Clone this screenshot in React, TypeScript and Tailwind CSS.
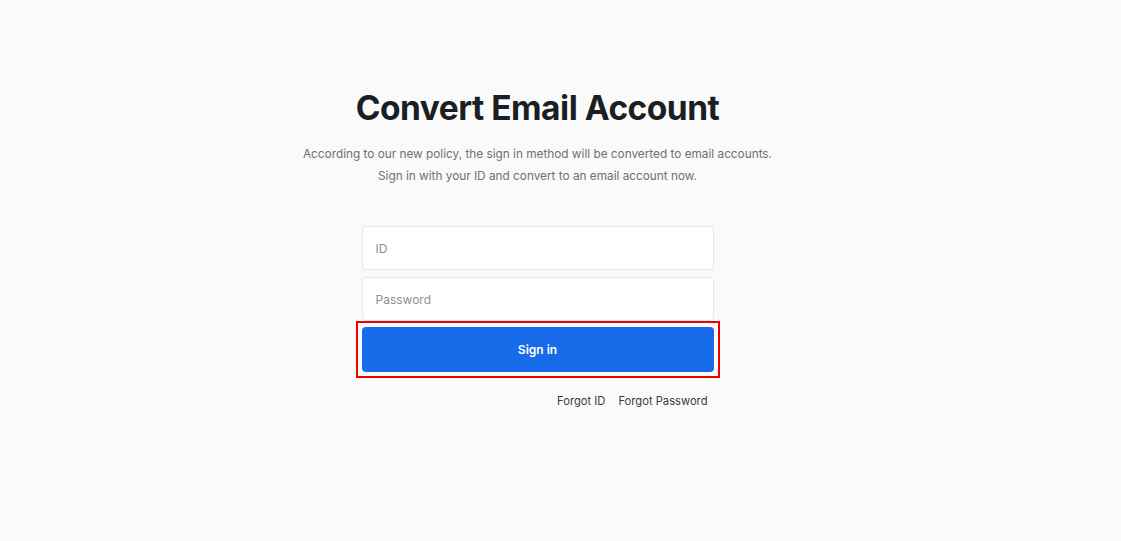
export default function App() {
  return (
    <div className="min-h-[541px] w-full bg-[#fafafa] font-['Inter',sans-serif]">
      <div className="flex flex-col items-center pr-[46px] pt-[86px]">
        <h1 className="text-[33.5px] font-bold leading-[44px] tracking-[-0.5px] text-[#1b1f24]">
          Convert Email Account
        </h1>
        <div className="mt-[13px] text-center text-[11.8px] leading-[22px] text-[#6b7079]">
          <p>According to our new policy, the sign in method will be converted to email accounts.</p>
          <p>Sign in with your ID and convert to an email account now.</p>
        </div>

        <form className="mt-[39px] flex w-[352px] flex-col">
          <input
            type="text"
            placeholder="ID"
            className="h-[44px] w-full rounded-[4px] border border-[#e6e7ea] bg-white px-[13px] text-[12px] text-[#1b1f24] placeholder:text-[#8a8f98] outline-none"
          />
          <input
            type="password"
            placeholder="Password"
            className="mt-[7px] h-[44px] w-full rounded-[4px] border border-[#e6e7ea] bg-white px-[13px] text-[12px] text-[#1b1f24] placeholder:text-[#8a8f98] outline-none"
          />
          <div className="-mx-[6px] border-2 border-[#ee0000] p-[4px]">
            <button
              type="button"
              className="block h-[45px] w-full rounded-[4px] bg-[#176be8] text-[12px] font-semibold text-white"
            >
              Sign in
            </button>
          </div>
          <div className="mt-[15px] flex justify-end gap-[13px] pr-[6px] text-[11.2px] leading-[16px] text-[#383c42]">
            <a href="#">Forgot ID</a>
            <a href="#">Forgot Password</a>
          </div>
        </form>
      </div>
    </div>
  )
}
